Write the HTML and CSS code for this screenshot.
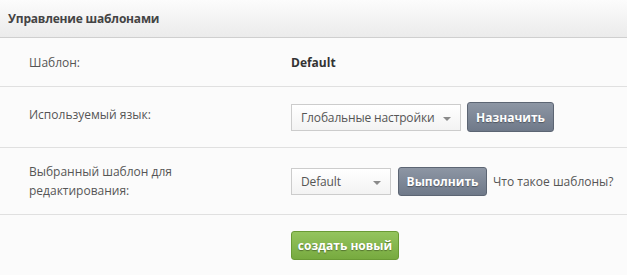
FILE: index.html
```html
<!DOCTYPE html>
<html lang="ru">
<head>
  <meta charset="UTF-8">
  <title>Управление шаблонами</title>
  <link rel="stylesheet" href="styles.css">
</head>
<body>

  <div class="panel">
    <div class="panel-head">Управление шаблонами</div>

    <div class="row row-info">
      <div class="label">Шаблон:</div>
      <div class="value"><strong>Default</strong></div>
    </div>

    <div class="row row-lang">
      <div class="label">Используемый язык:</div>
      <div class="value">
        <div class="select select-wide">Глобальные настройки</div>
        <button class="btn btn-gray btn-assign">Назначить</button>
      </div>
    </div>

    <div class="row row-edit">
      <div class="label">Выбранный шаблон для редактирования:</div>
      <div class="value">
        <div class="select select-small">Default</div>
        <button class="btn btn-gray btn-run">Выполнить</button>
        <a class="help" href="#">Что такое шаблоны?</a>
      </div>
    </div>

    <div class="actions">
      <button class="btn btn-green">создать новый</button>
    </div>
  </div>

</body>
</html>
```

FILE: styles.css
```css
* {
  box-sizing: border-box;
}

body {
  margin: 0;
  background: #fbfbfb;
  font-family: 'Open Sans', sans-serif;
  font-size: 12px;
  color: #555;
}

.panel-head {
  height: 38px;
  padding: 0 8px;
  display: flex;
  align-items: center;
  font-weight: bold;
  letter-spacing: -0.2px;
  color: #444;
  background: linear-gradient(#fcfcfc, #ebebeb);
  border-bottom: 1px solid #cfcfcf;
}

.row {
  display: flex;
  align-items: center;
  border-bottom: 1px solid #e0e0e0;
}

.row-info {
  height: 49px;
}

.row-lang {
  height: 61px;
}

.row-edit {
  height: 67px;
}

.label {
  flex: 0 0 291px;
  padding-left: 29px;
  padding-right: 100px;
  line-height: 19px;
}

.row-lang .label {
  margin-top: -5px;
}

.value {
  display: flex;
  align-items: center;
  color: #333;
}

.select {
  position: relative;
  height: 27px;
  padding: 0 9px;
  display: flex;
  align-items: center;
  color: #555;
  letter-spacing: -0.15px;
  background: linear-gradient(#ffffff, #f3f3f3);
  border: 1px solid #cccccc;
}

.select::after {
  content: '';
  position: absolute;
  right: 9px;
  top: 12px;
  border-left: 4px solid transparent;
  border-right: 4px solid transparent;
  border-top: 4px solid #8a8a8a;
}

.select-wide {
  width: 170px;
}

.select-small {
  width: 100px;
}

.btn {
  font-family: 'Open Sans', sans-serif;
  font-size: 12px;
  font-weight: bold;
  color: #fff;
  border-radius: 3px;
  padding: 0;
  cursor: pointer;
  text-shadow: 0 1px 1px rgba(0, 0, 0, 0.35);
}

.btn-gray {
  background: linear-gradient(#8d96a4, #6f7989);
  border: 1px solid #5c6573;
}

.btn-assign {
  width: 87px;
  height: 30px;
  margin-left: 6px;
}

.btn-run {
  width: 89px;
  height: 29px;
  margin-left: 7px;
}

.help {
  margin-left: 6px;
  color: #555;
  text-decoration: none;
}

.btn-green {
  width: 108px;
  height: 29px;
  background: linear-gradient(#94c45e, #77aa3f);
  border: 1px solid #6a9a35;
}

.actions {
  padding: 16px 0 0 291px;
}
```
